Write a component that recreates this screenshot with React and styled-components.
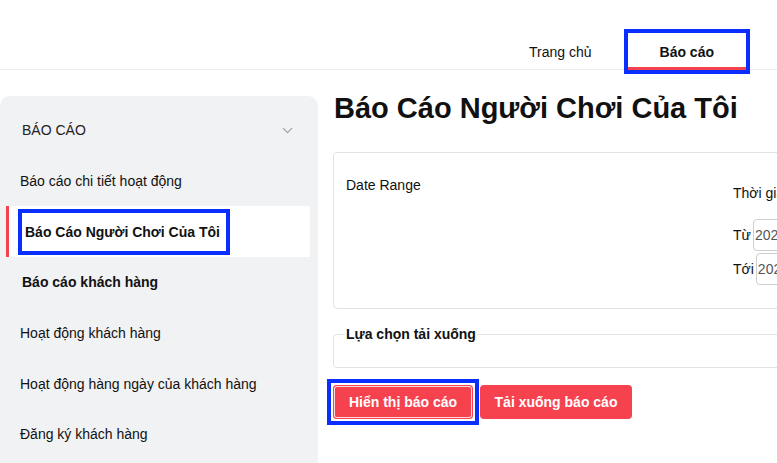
import React from 'react'
import styled, { createGlobalStyle } from 'styled-components'
import { ChevronDown } from 'lucide-react'

const GlobalStyle = createGlobalStyle`
    body {
        margin: 0;
        font-family: 'Liberation Sans', Arial, sans-serif;
        color: #111;
        background: #fff;
        overflow: hidden;
    }
`

const Header = styled.header`
    height: 70px;
    border-bottom: 1px solid #ececec;
    display: flex;
    justify-content: flex-end;
    align-items: flex-end;
    padding-right: 31px;
    box-sizing: border-box;
`

const Tab = styled.div`
    height: 37px;
    margin-bottom: -1px;
    padding: 4px 32px 0;
    box-sizing: border-box;
    display: flex;
    align-items: center;
    font-size: 14px;
    font-weight: ${props => props.active ? 700 : 400};
    border-bottom: 3px solid ${props => props.active ? '#f4424f' : 'transparent'};
    outline: ${props => props.highlight ? '4px solid #0a2eff' : 'none'};
    margin-left: 4px;
`

const Body = styled.div`
    display: flex;
    gap: 15px;
    padding-top: 26px;
`

const Sidebar = styled.aside`
    width: 318px;
    flex-shrink: 0;
    height: 400px;
    background: #f1f2f4;
    border-radius: 10px 10px 0 0;
    padding-top: 9px;
    box-sizing: border-box;
`

const SectionHead = styled.div`
    height: 50.7px;
    display: flex;
    align-items: center;
    justify-content: space-between;
    padding: 0 22px 0 22px;
    font-size: 14px;
    color: #222;
`

const Item = styled.div`
    height: 50.7px;
    display: flex;
    align-items: center;
    padding-left: ${props => props.indent || 20}px;
    font-size: 14px;
    font-weight: ${props => props.bold ? 700 : 400};
    color: #111;
`

const ActiveItem = styled.div`
    height: 50.7px;
    display: flex;
    align-items: center;
    margin: 0 8px 0 6px;
    padding-left: 9px;
    background: #fff;
    border-left: 3px solid #f4424f;
    font-size: 14px;
    font-weight: 700;
`

const Marked = styled.span`
    display: flex;
    align-items: center;
    height: 46px;
    box-sizing: border-box;
    border: 4px solid #0a2eff;
    padding: 0 6px 0 3px;
`

const Main = styled.main`
    flex: 1;
    min-width: 0;
`

const Title = styled.h1`
    margin: 0;
    font-size: 29px;
    font-weight: 700;
    line-height: 24px;
    margin-left: 1px;
`

const Card = styled.div`
    margin-top: 32px;
    width: 640px;
    height: 157px;
    border: 1px solid #e3e3e3;
    border-radius: 4px;
    box-sizing: border-box;
    display: grid;
    grid-template-columns: 399px 1fr;
`

const Label = styled.div`
    font-size: 14px;
    padding: 24px 0 0 12px;
`

const RangeCol = styled.div`
    display: flex;
    flex-direction: column;
    padding-top: 32px;
    font-size: 14px;
`

const RangeTitle = styled.div`
    margin-bottom: 17px;
`

const DateRow = styled.div`
    display: flex;
    align-items: center;
    gap: 2px;
    height: 33px;
    margin-bottom: 1px;
`

const DateInput = styled.div`
    height: 32px;
    width: 120px;
    box-sizing: border-box;
    border: 1px solid #cfcfcf;
    border-radius: 4px;
    padding-left: 1px;
    display: flex;
    align-items: center;
    color: #555;
    font-size: 14px;
`

const Fieldset = styled.fieldset`
    margin: 17px 0 0;
    width: 640px;
    height: 42px;
    box-sizing: border-box;
    border: 1px solid #e3e3e3;
    border-radius: 4px;
    padding: 0 12px;
`

const Legend = styled.legend`
    font-size: 14px;
    font-weight: 700;
    padding: 0 1px;
    margin-left: -1px;
`

const Buttons = styled.div`
    display: flex;
    align-items: center;
    gap: 7px;
    margin-top: 11px;
    margin-left: -6px;
`

const Focus = styled.span`
    display: flex;
    border: 4px solid #0a2eff;
    padding: 2px;
    margin-right: -6px;
`

const Button = styled.button`
    height: 34px;
    width: ${props => props.w}px;
    border: none;
    border-radius: 4px;
    background: #f6424f;
    color: #fff;
    font-family: 'Liberation Sans', Arial, sans-serif;
    font-size: 14px;
    font-weight: 700;
    padding: 0;
    box-shadow: ${props => props.focused ? 'inset 0 0 0 1px #f6424f, inset 0 0 0 2px #ffd9dc' : 'none'};
`

export default function App() {
    return (
        <>
            <GlobalStyle />
            <Header>
                <Tab>Trang chủ</Tab>
                <Tab active highlight>Báo cáo</Tab>
            </Header>
            <Body>
                <Sidebar>
                    <SectionHead>
                        <span>BÁO CÁO</span>
                        <ChevronDown size={17} color="#9a9a9a" strokeWidth={1.5} />
                    </SectionHead>
                    <Item>Báo cáo chi tiết hoạt động</Item>
                    <ActiveItem><Marked>Báo Cáo Người Chơi Của Tôi</Marked></ActiveItem>
                    <Item bold indent={22}>Báo cáo khách hàng</Item>
                    <Item>Hoạt động khách hàng</Item>
                    <Item>Hoạt động hàng ngày của khách hàng</Item>
                    <Item>Đăng ký khách hàng</Item>
                </Sidebar>
                <Main>
                    <Title>Báo Cáo Người Chơi Của Tôi</Title>
                    <Card>
                        <Label>Date Range</Label>
                        <RangeCol>
                            <RangeTitle>Thời gian</RangeTitle>
                            <DateRow>Từ <DateInput>2024-01-01</DateInput></DateRow>
                            <DateRow>Tới <DateInput>2024-01-31</DateInput></DateRow>
                        </RangeCol>
                    </Card>
                    <Fieldset>
                        <Legend>Lựa chọn tải xuống</Legend>
                    </Fieldset>
                    <Buttons>
                        <Focus><Button w={140} focused>Hiển thị báo cáo</Button></Focus>
                        <Button w={152}>Tải xuống báo cáo</Button>
                    </Buttons>
                </Main>
            </Body>
        </>
    )
}
